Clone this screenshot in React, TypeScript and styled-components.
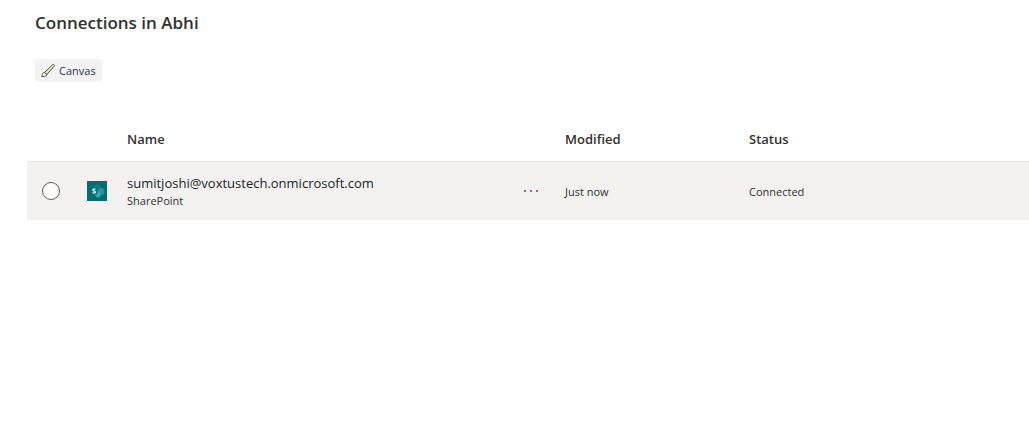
import React from "react";
import styled, { createGlobalStyle } from "styled-components";

const GlobalStyle = createGlobalStyle`
  * { box-sizing: border-box; }
  body {
    margin: 0;
    background: #fff;
    color: #323130;
    font-family: "Open Sans", "Noto Sans", sans-serif;
    font-size: 11px;
    line-height: 18px;
  }
`;

const Page = styled.main`
  padding: 11px 0 0 27px;
`;

const Title = styled.h1`
  margin: 0;
  padding-left: 8px;
  font-size: 17px;
  line-height: 24px;
  font-weight: 600;
`;

const Toolbar = styled.div`
  display: flex;
  padding: 24px 8px 0;
`;

const ToolbarButton = styled.button`
  display: flex;
  align-items: center;
  gap: 3px;
  height: 23px;
  padding: 0 6px;
  border: 0;
  border-radius: 3px;
  background: #f3f3f3;
  color: #323150;
  font: inherit;
`;

const Table = styled.table`
  width: 100%;
  margin-top: 34px;
  border-collapse: collapse;
  table-layout: fixed;
`;

const Column = styled.col<{ $width?: number }>`
  width: ${({ $width }) => ($width ? `${$width}px` : "auto")};
`;

const HeaderCell = styled.th`
  height: 45px;
  padding: 2px 8px 0;
  border-bottom: 1px solid #e8e7e6;
  text-align: left;
  font-size: 13px;
  font-weight: 600;
`;

const Row = styled.tr`
  background: #f3f2f1;
`;

const Cell = styled.td`
  height: 59px;
  padding: 0 8px;
  vertical-align: middle;
`;

const TextCell = styled(Cell)`
  padding-top: 2px;
`;

const Radio = styled.input`
  appearance: none;
  display: block;
  width: 18px;
  height: 18px;
  margin: 0 0 0 7px;
  border: 1px solid #605e5c;
  border-radius: 50%;
  background: #fff;
  &:checked { box-shadow: inset 0 0 0 4px #fff; background: #742774; }
`;

const ConnectionName = styled.div`
  color: #201f1e;
  font-size: 13px;
`;

const Connector = styled.div`
  color: #323130;
`;

const MoreButton = styled.button`
  display: flex;
  align-items: center;
  height: 24px;
  padding: 0;
  border: 0;
  background: none;
  color: #a0659f;
`;

const Icon = styled.svg`
  display: block;
  flex: none;
`;

const BrushIcon = () => (
  <Icon width="15" height="15" viewBox="0 0 15 15" fill="none" stroke="#555350" strokeLinejoin="round" aria-hidden="true">
    <path d="M3.6 9.4 11.6 1.6c.8-.7 2.4.4 1.6 1.5L5.8 11.6Z" fill="#dfe6c8" />
    <path d="M3.6 9.4C2.2 9.3 1.4 10.2 1.4 11.4c0 .9-.3 1.5-.9 2h2.9c1.6 0 2.5-.8 2.4-1.9Z" fill="#fafafa" />
  </Icon>
);

const SharePointIcon = () => (
  <Icon width="20" height="20" viewBox="0 0 20 20" role="img" aria-label="SharePoint">
    <path fill="#036c70" d="M0 0h20v20H0z" />
    <circle cx="10" cy="7.5" r="4.2" fill="#0b7f83" />
    <circle cx="14" cy="10.5" r="3.6" fill="#2596a0" />
    <circle cx="11" cy="13.6" r="2.8" fill="#35adb3" />
    <rect x="3.6" y="6.6" width="6.8" height="6.8" rx=".6" fill="#03767b" />
    <path d="M8.4 8.4C7.6 7.9 5.8 7.9 5.8 9c0 1.3 2.7.7 2.7 2 0 1.2-2 1.2-2.8.6" fill="none" stroke="#fff" strokeWidth="1.2" />
  </Icon>
);

const MoreIcon = () => (
  <Icon width="16" height="2" viewBox="0 0 16 2" fill="currentColor" aria-hidden="true">
    <path d="M1 0h2v2H1zM7 0h2v2H7zM13 0h2v2h-2z" />
  </Icon>
);

const connections = [
  { name: "sumitjoshi@voxtustech.onmicrosoft.com", connector: "SharePoint", modified: "Just now", status: "Connected" },
];

export default function App() {
  return (
    <>
      <GlobalStyle />
      <Page>
        <Title>Connections in Abhi</Title>
        <Toolbar>
          <ToolbarButton type="button"><BrushIcon />Canvas</ToolbarButton>
        </Toolbar>
        <Table>
          <colgroup>
            <Column $width={52} />
            <Column $width={40} />
            <Column $width={396} />
            <Column $width={42} />
            <Column $width={184} />
            <Column />
          </colgroup>
          <thead>
            <tr>
              <HeaderCell aria-label="Select" />
              <HeaderCell aria-label="Icon" />
              <HeaderCell scope="col">Name</HeaderCell>
              <HeaderCell aria-label="Actions" />
              <HeaderCell scope="col">Modified</HeaderCell>
              <HeaderCell scope="col">Status</HeaderCell>
            </tr>
          </thead>
          <tbody>
            {connections.map((c) => (
              <Row key={c.name}>
                <Cell><Radio type="radio" name="connection" aria-label={c.name} /></Cell>
                <Cell><SharePointIcon /></Cell>
                <TextCell>
                  <ConnectionName>{c.name}</ConnectionName>
                  <Connector>{c.connector}</Connector>
                </TextCell>
                <Cell><MoreButton type="button" aria-label="More commands"><MoreIcon /></MoreButton></Cell>
                <TextCell>{c.modified}</TextCell>
                <TextCell>{c.status}</TextCell>
              </Row>
            ))}
          </tbody>
        </Table>
      </Page>
    </>
  );
}
